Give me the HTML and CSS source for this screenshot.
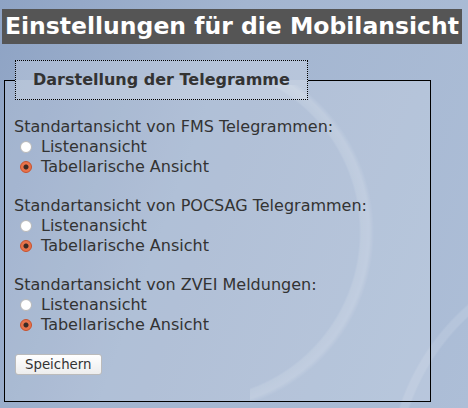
FILE: index.html
```html
<!DOCTYPE html>
<html lang="de">
<head>
    <meta charset="UTF-8">
    <meta name="viewport" content="width=device-width, initial-scale=1.0">
    <title>Mobilansicht</title>
    <link rel="stylesheet" href="styles.css">
</head>
<body>
    <h1 class="title">Einstellungen für die Mobilansicht</h1>

    <form class="settings">
        <fieldset class="box">
            <legend class="box-title">Darstellung der Telegramme</legend>

            <div class="group">
                <p class="question">Standartansicht von FMS Telegrammen:</p>
                <label class="option"><input type="radio" name="fms" value="list"> Listenansicht</label>
                <label class="option"><input type="radio" name="fms" value="table" checked> Tabellarische Ansicht</label>
            </div>

            <div class="group">
                <p class="question">Standartansicht von POCSAG Telegrammen:</p>
                <label class="option"><input type="radio" name="pocsag" value="list"> Listenansicht</label>
                <label class="option"><input type="radio" name="pocsag" value="table" checked> Tabellarische Ansicht</label>
            </div>

            <div class="group">
                <p class="question">Standartansicht von ZVEI Meldungen:</p>
                <label class="option"><input type="radio" name="zvei" value="list"> Listenansicht</label>
                <label class="option"><input type="radio" name="zvei" value="table" checked> Tabellarische Ansicht</label>
            </div>

            <button type="submit" class="save-btn">Speichern</button>
        </fieldset>
    </form>
</body>
</html>
```

FILE: styles.css
```css
html {
    height: 100%;
}
body {
    margin: 0;
    min-height: 100%;
    font-family: "DejaVu Sans", Verdana, sans-serif;
    color: #333;
    background-color: #a3b5d0;
    /* swooshes: big ring only shown on the right half */
    background-image:
        radial-gradient(circle at -57px 147px, transparent 166px, rgba(255, 255, 255, 0.12) 168px, rgba(255, 255, 255, 0.17) 176px, transparent 181px),
        radial-gradient(circle at 620px 480px, transparent 222px, rgba(255, 255, 255, 0.12) 224px, rgba(255, 255, 255, 0.12) 231px, transparent 233px),
        linear-gradient(110deg, #8ea3c4 0%, #a3b5d0 40%, #adbed7 100%);
    background-position: 250px 85px, 0 0, 0 0;
    background-size: 218px 323px, 100% 100%, 100% 100%;
    background-repeat: no-repeat;
}
.title {
    display: inline-block;
    margin: 9px 0 0 2px;
    padding: 0 3px;
    background: #555;
    color: #fff;
    font-size: 23.5px;
    line-height: 35px;
    font-weight: bold;
}
.settings {
    margin: 16px 0 0 4px;
    width: 427px;
}
.box {
    margin: 0;
    padding: 17px 9px 26px;
    border: 1px solid #000;
    background: rgba(255, 255, 255, 0.15);
}
.box-title {
    margin-left: 1px;
    padding: 9px 17px 10px;
    border: 1px dotted #000;
    background: rgba(255, 255, 255, 0.2);
    font-size: 16px;
    line-height: 19px;
    font-weight: bold;
    color: #333;
}
.group {
    margin-bottom: 19px;
}
.question {
    margin: 0;
    font-size: 16px;
    line-height: 20px;
}
.option {
    display: flex;
    align-items: center;
    gap: 9px;
    padding-left: 6px;
    font-size: 16px;
    line-height: 20px;
}
.option input {
    appearance: none;
    margin: 0;
    width: 12px;
    height: 12px;
    border-radius: 50%;
    border: 1px solid #b9b9b9;
    background: #fff;
}
.option input:checked {
    border-color: #c9502a;
    background: radial-gradient(circle, #3a2a25 0 2px, #e8734b 3px);
}
.save-btn {
    margin: 0 0 0 1px;
    padding: 2px 9px;
    font-family: inherit;
    font-size: 13.33px;
    color: #333;
    background: linear-gradient(#fff, #ededed);
    border: 1px solid #bbb;
    border-radius: 3px;
}
```
